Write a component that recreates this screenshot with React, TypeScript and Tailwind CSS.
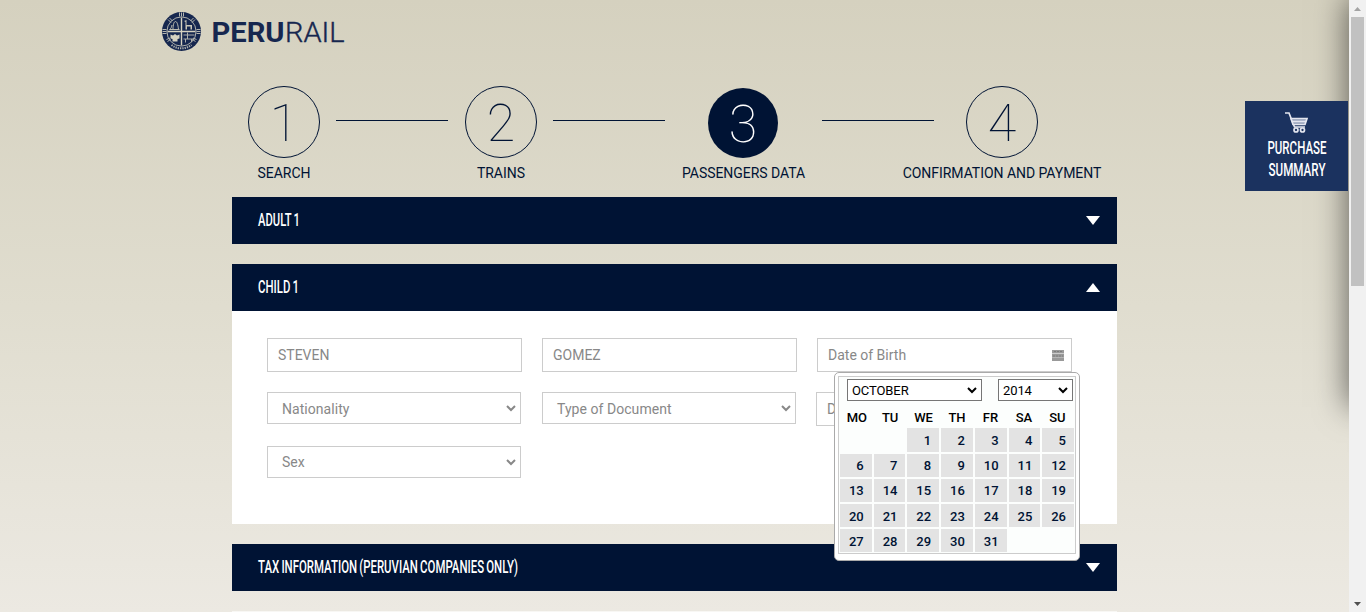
import React from 'react';

const NAVY = '#16274f';

function Logo() {
  return (
    <svg width="184" height="42" viewBox="0 0 184 42" className="block">
      <g transform="translate(.5 .5)">
        <circle cx="20" cy="21" r="19.5" fill={NAVY} />
        <circle cx="20" cy="21" r="14.6" fill="none" stroke="#aeb0ac" strokeWidth="1" />
        <path
          d="M18 2v4M20 2v4M22 2v4M1 19h4M1 21h4M1 23h4M35 19h4M35 21h4M35 23h4M6.500 9l3 3M8 7.500l3 3M33.500 9l-3 3M32 7.500l-3 3M5 29l3.500-1.500M6 31l3-2M35 29l-3.500-1.500M34 31l-3-2"
          stroke="#b5b6b0"
          strokeWidth="1"
        />
        <path d="M10 34.500c6 4.500 14 4.500 20 0" fill="none" stroke="#aeb0ac" strokeWidth="2" strokeDasharray="1.300 1" />
        <path d="M20 7v28M6 21h28" stroke="#d6d2c1" strokeWidth="1.400" />
        <path d="M8 19c2-1 2-3 2.500-4.500M11.500 19c0-5 1-8 2.500-8s2.500 3 3 8M8 19h10" fill="none" stroke="#bbbab0" strokeWidth="1" />
        <path d="M22.500 10.500l2.500-1v5h5.500v4.500H29v-3h-3.500v3H24v-7.500z" fill="#c9c6b8" />
        <path d="M9 24l2.500 1 2-1.500 2 1.500 2.500-1v4l-2 .5v2.500h-5v-2.500l-2-.5z" fill="#d6d2c1" />
        <path d="M22 24.500h11M22 28.500h11M26 22v6.500M24 28.500V32M30 28.500v3" stroke="#aeb0ac" strokeWidth="1" />
      </g>
      <text x="50.500" y="31.5" textLength="73" lengthAdjust="spacingAndGlyphs" className="font-['Roboto',sans-serif] text-[28px] font-bold" fill={NAVY}>PERU</text>
      <text x="124" y="31.500" textLength="59.500" lengthAdjust="spacingAndGlyphs" stroke={NAVY} strokeWidth="0.4" className="font-['Roboto',sans-serif] text-[28px] font-light" fill={NAVY}>RAIL</text>
    </svg>
  );
}

function Step({ n, label, active, wide }: { n: string; label: string; active?: boolean; wide?: boolean }) {
  return (
    <div className={`flex h-[98px] shrink-0 flex-col items-center ${wide ? 'w-[123px]' : 'w-[72px]'}`}>
      <div
        className={`flex shrink-0 items-center justify-center rounded-full text-[52px] leading-none font-thin ${
          active ? 'mt-[2px] mr-px size-[70px] bg-[#001334] text-white' : 'size-[72px] border border-[#001334] text-[#001334]'
        }`}
      >
        <span className="pt-[4px]">{n}</span>
      </div>
      <div className="mt-[5px] text-[14px] leading-5 whitespace-nowrap text-[#001334]">
        <span className={wide || n === '4' ? 'tracking-[-0.04px]' : ''}>{label}</span>
      </div>
    </div>
  );
}

function Rule({ first }: { first?: boolean }) {
  return <div className={`mt-[34px] mr-[17px] h-px w-[112px] shrink-0 bg-[#001334] ${first ? 'ml-4' : 'ml-[17px]'}`} />;
}

function Bar({ label, up, w }: { label: string; up?: boolean; w: string }) {
  return (
    <div className="flex h-[47px] items-center justify-between bg-[#001334] pr-[17px] pl-[26px] text-white">
      <svg width={w} height="24" className="block overflow-visible">
        <text x="0" y="17" textLength={w} lengthAdjust="spacingAndGlyphs" fill="currentColor" className="font-['Roboto',sans-serif] text-[18px] font-medium [word-spacing:-1px]">
          {label}
        </text>
      </svg>
      <svg width="14" height="9" viewBox="0 0 14 9">
        <path d={up ? 'M0 9L7 0l7 9z' : 'M0 0h14L7 9z'} fill="white" />
      </svg>
    </div>
  );
}

function Chevron({ small }: { small?: boolean }) {
  return (
    <svg width="10" height="7" viewBox="0 0 10 7" fill="none" className="shrink-0">
      <path d="M1 1l4 4 4-4" stroke={small ? '#000' : '#888'} strokeWidth="2" />
    </svg>
  );
}

function Field({ text, date }: { text: string; date?: boolean }) {
  return (
    <div className="flex h-[34px] w-[255px] items-center justify-between border border-[#ccc] bg-white pr-[7px] pl-[10px] text-[14px] text-[#888]">
      {text}
      {date && (
        <svg width="12" height="11" viewBox="0 0 12 11">
          <path d="M0 0h12v11H0z" fill="#999" />
          <path d="M0 3.500h12" stroke="#ccc" />
          <path d="M0 7.500h12" stroke="#b5b5b5" />
          <path d="M2 1.500h8M1 6h10" stroke="#7c7c7c" strokeDasharray="2 1" />
        </svg>
      )}
    </div>
  );
}

function Select({ text }: { text: string }) {
  return (
    <div className="flex h-8 w-[254px] items-center justify-between border border-[#ccc] bg-white pr-1 pl-[14px] text-[14px] text-[#888]">
      <span className={text === 'Sex' ? 'pt-px' : 'pt-[2px] tracking-[0.05px]'}>{text}</span>
      <Chevron />
    </div>
  );
}

const DAYS = ['MO', 'TU', 'WE', 'TH', 'FR', 'SA', 'SU'];
const CELLS: (number | null)[] = [null, null, ...Array.from({ length: 31 }, (_, i) => i + 1), null, null];

function Calendar() {
  return (
    <div className="absolute top-[61px] left-[602px] z-10 h-[189px] w-[246px] rounded-[5px] border border-[#aaa] bg-white p-[3px]">
      <div className="h-[178px] border border-[#ccc] bg-[#fcfefd] px-px pt-[2px]">
        <div className="flex justify-between pr-px pl-[7px] text-[13px] text-black">
          <div className="flex h-[22px] w-[135px] items-center justify-between border border-[#767676] bg-white pr-[4px] pl-[4px]">
            <span className="pt-px tracking-[-0.1px]">OCTOBER</span>
            <Chevron small />
          </div>
          <div className="flex h-[22px] w-[75px] items-center justify-between border border-[#767676] bg-white pr-[4px] pl-[4px]">
            <span className="pt-px tracking-[-0.1px]">2014</span>
            <Chevron small />
          </div>
        </div>
        <div className="mt-[7px] grid h-5 grid-cols-7 text-center text-[13px] leading-5 font-medium text-black">
          {DAYS.map((d) => (
            <span key={d} className="tracking-[-0.1px]">{d}</span>
          ))}
        </div>
        <div className="grid grid-cols-7 grid-rows-[24px_23px_23px_23px_23px] gap-[2px]">
          {CELLS.map((n, i) => (
            <span
              key={i}
              className={`flex items-center justify-end pr-2 text-[13px] leading-none font-medium text-[#001334] ${i < 7 || i > 20 ? 'pt-px' : ''} ${n ? 'bg-[#e3e3e3]' : ''}`}
            >
              {n}
            </span>
          ))}
        </div>
      </div>
    </div>
  );
}

export default function App() {
  return (
    <div className="flex h-[612px] w-[1366px] overflow-hidden font-['Roboto',sans-serif]">
      <main className="relative h-full w-[1349px] overflow-hidden bg-linear-to-b from-[#d5d1bf] via-[#e0ddcf] to-[#ece9e2]">
        <header className="h-[86px] pt-[10px] pl-[161px]">
          <Logo />
        </header>
        <div className="ml-[248px] flex h-[111px]">
          <Step n="1" label="SEARCH" />
          <Rule first />
          <Step n="2" label="TRAINS" />
          <Rule first />
          <Step n="3" label="PASSENGERS DATA" active wide />
          <Rule />
          <div className="ml-[15px]">
            <Step n="4" label="CONFIRMATION AND PAYMENT" />
          </div>
        </div>
        <div className="ml-[232px] flex w-[885px] flex-col gap-5">
          <Bar label="ADULT 1" w="42" />
          <section>
            <Bar label="CHILD 1" up w="41" />
            <div className="relative h-[213px] bg-white pt-[27px] pl-[35px]">
              <div className="flex gap-5">
                <Field text="STEVEN" />
                <Field text="GOMEZ" />
                <Field text="Date of Birth" date />
              </div>
              <div className="mt-5 flex h-[34px] gap-[21px]">
                <Select text="Nationality" />
                <Select text="Type of Document" />
                <div className="-ml-px">
                  <Field text="D" />
                </div>
              </div>
              <div className="mt-5">
                <Select text="Sex" />
              </div>
              <Calendar />
            </div>
          </section>
          <Bar label="TAX INFORMATION (PERUVIAN COMPANIES ONLY)" w="260" />
          <div className="h-5 bg-[#f8f7f4]" />
        </div>
        <div className="absolute top-0 left-[1349px] h-[405px] w-[300px] shadow-[0_0_30px_2px_rgba(0,0,0,0.55)]" />
        <aside className="absolute top-[101px] right-px flex h-[90px] w-[103px] flex-col items-center bg-[#1b325f] pt-[11px] text-white">
          <svg width="23" height="21" viewBox="0 0 23 21" fill="none" stroke="#e4e6ef" strokeWidth="1.7">
            <path d="M0 1h4l5.500 14H20" />
            <path d="M6 6.500h16l-2 6H8z" fill="#8f9bb5" />
            <path d="M7 9.500h14" />
            <circle cx="11" cy="18" r="2" />
            <circle cx="17.500" cy="18" r="2" />
          </svg>
          <svg width="80" height="50" viewBox="-10 0 80 50" className="mt-[3px] block overflow-visible" fill="currentColor">
            <text x="0.500" y="17.500" textLength="59" lengthAdjust="spacingAndGlyphs" className="font-['Roboto',sans-serif] text-[18px] font-medium">PURCHASE</text>
            <text x="1.500" y="39.500" textLength="57" lengthAdjust="spacingAndGlyphs" className="font-['Roboto',sans-serif] text-[18px] font-medium">SUMMARY</text>
          </svg>
        </aside>
      </main>
      <div className="flex h-full w-[17px] flex-col items-center bg-[#f1f1f1]">
        <div className="flex h-[17px] items-center pt-px">
          <svg width="7" height="4"><path d="M0 4L3.500 0 7 4z" fill="#a3a3a3" /></svg>
        </div>
        <div className="h-[269px] w-[13px] bg-[#c1c1c1]" />
        <div className="mt-auto flex h-[17px] items-center">
          <svg width="7" height="4"><path d="M0 0h7L3.500 4z" fill="#505050" /></svg>
        </div>
      </div>
    </div>
  );
}
